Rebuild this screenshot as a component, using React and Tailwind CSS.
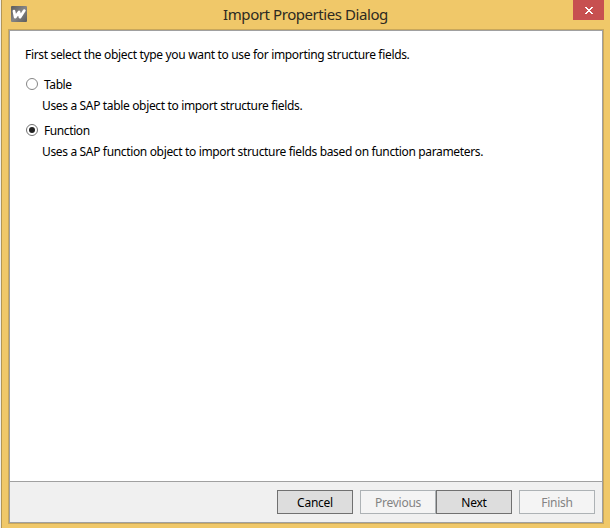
import React from "react";

function Option({ label, description, checked }) {
  return (
    <div className="h-[46px]">
      <div className="flex h-4 items-center">
        <svg width="12" height="12" viewBox="0 0 12 12" className="mr-[6px] mb-0.5">
          <circle cx="6" cy="6" r="5.5" fill="#fff" stroke={checked ? "#707070" : "#858585"} />
          {checked && <circle cx="6" cy="6" r="3" fill="#212121" />}
        </svg>
        <span className="text-[12px] leading-4 tracking-[-0.4px]">{label}</span>
      </div>
      <p className="mt-[5px] ml-4 whitespace-nowrap text-[12px] leading-4 tracking-[-0.345px]">{description}</p>
    </div>
  );
}

function Button({ children, disabled }) {
  return (
    <button
      disabled={disabled}
      className={
        "h-6 w-[76px] border pt-px text-[12px] leading-4 tracking-[-0.25px] " +
        (disabled ? "border-[#adb2b5] bg-[#f4f4f4] text-[#838383]" : "border-[#707070] bg-[#dddddd] text-black")
      }
    >
      {children}
    </button>
  );
}

export default function App() {
  return (
    <div className="flex h-[528px] w-[610px] flex-col overflow-hidden border-l border-[#eeeeee] bg-[#f0c869] font-['Noto_Sans',sans-serif] text-black">
      <div className="flex h-full flex-col border-l border-[#b39655] pr-[6px] pb-1 pl-[6px]">
        <header className="flex h-[29px] shrink-0 items-start">
          <svg width="16" height="16" viewBox="0 0 16 16" className="mt-[6px] ml-[3px]">
            <defs>
              <linearGradient id="logo" x1="0" x2="1" y1="0" y2="1">
                <stop offset="0" stopColor="#5c5c5c" />
                <stop offset="0.5" stopColor="#858585" />
                <stop offset="1" stopColor="#5c5c5c" />
              </linearGradient>
            </defs>
            <rect width="16" height="16" rx="1" fill="url(#logo)" />
            <path d="M3 5.2 L4.2 11.2 L8 6 L9 11.2 L13.3 4.6" fill="none" stroke="#fff" strokeWidth="2.8" strokeLinejoin="round" strokeLinecap="round" />
          </svg>
          <h1 className="mt-1 flex-1 pl-[11px] text-center text-[15px] leading-5 tracking-[-0.43px] text-[#2d2a22]">Import Properties Dialog</h1>
          <button aria-label="Close" className="flex h-5 w-[31px] justify-center bg-[#c75050] pt-[7px]">
            <svg width="8" height="7" viewBox="0 0 8 7" shapeRendering="crispEdges">
              <path d="M0 0h2v1H0zM6 0h2v1H6zM1 1h2v1H1zM5 1h2v1H5zM2 2h4v1H2zM3 3h2v1H3zM2 4h4v1H2zM1 5h2v1H1zM5 5h2v1H5zM0 6h2v1H0zM6 6h2v1H6z" fill="#fff" />
            </svg>
          </button>
        </header>
        <main className="flex min-h-0 flex-1 flex-col border border-[#c9a75a]">
          <div className="flex flex-1 flex-col border border-[#a0a0a0] bg-white">
            <section className="flex-1 pt-4 pl-4">
              <p className="mb-[14px] -ml-px whitespace-nowrap text-[12px] leading-4 tracking-[-0.33px]">
                First select the object type you want to use for importing structure fields.
              </p>
              <Option label="Table" description="Uses a SAP table object to import structure fields." />
              <Option label="Function" checked description="Uses a SAP function object to import structure fields based on function parameters." />
            </section>
            <footer className="flex h-[41px] shrink-0 items-start justify-end border-t border-[#a0a0a0] bg-[#f0f0f0] pt-2 pr-[7px]">
              <Button>Cancel</Button>
              <div className="mr-[7px] ml-[7px] flex">
                <Button disabled>Previous</Button>
                <Button>Next</Button>
              </div>
              <Button disabled>Finish</Button>
            </footer>
          </div>
        </main>
      </div>
    </div>
  );
}
